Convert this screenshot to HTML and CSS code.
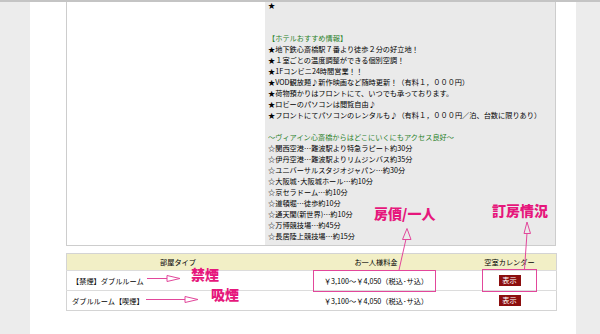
FILE: index.html
```html
<!DOCTYPE html>
<html lang="ja">
<head>
  <meta charset="UTF-8">
  <title>ヴィアイン心斎橋 プラン</title>
  <link rel="stylesheet" href="styles.css">
</head>
<body>

  <div class="page">
    <!-- room photo + hotel info -->
    <div class="room">
      <div class="photo"></div>
      <div class="info">
        <div class="lines">
          ★<br>
          <br>
          <br>
          <span class="green">【ホテルおすすめ情報】</span><br>
          ★地下鉄心斎橋駅７番より徒歩２分の好立地！<br>
          ★１室ごとの温度調整ができる個別空調！<br>
          ★1Fコンビニ24時間営業！！<br>
          ★VOD観放題♪新作映画など随時更新！（有料１，０００円）<br>
          ★荷物預かりはフロントにて、いつでも承っております。<br>
          ★ロビーのパソコンは閲覧自由♪<br>
          ★フロントにてパソコンのレンタルも♪（有料１，０００円／泊、台数に限りあり）<br>
          <br>
          <span class="green">～ヴィアイン心斎橋からはどこにいくにもアクセス良好～</span><br>
          ☆関西空港…難波駅より特急ラピート約30分<br>
          ☆伊丹空港…難波駅よりリムジンバス約35分<br>
          ☆ユニバーサルスタジオジャパン…約30分<br>
          ☆大阪城･大阪城ホール…約10分<br>
          ☆京セラドーム…約10分<br>
          ☆道頓堀…徒歩約10分<br>
          ☆通天閣(新世界)…約10分<br>
          ☆万博競技場…約45分<br>
          ☆長居陸上競技場…約15分
        </div>
      </div>
    </div>

    <!-- plan table -->
    <table class="plans">
      <tr>
        <th class="col-type">部屋タイプ</th>
        <th class="col-price">お一人様料金</th>
        <th class="col-cal">空室カレンダー</th>
      </tr>
      <tr>
        <td>【禁煙】ダブルルーム</td>
        <td class="price">￥3,100～￥4,050（税込･サ込）</td>
        <td class="cal"><span class="show">表示</span></td>
      </tr>
      <tr>
        <td>ダブルルーム【喫煙】</td>
        <td class="price">￥3,100～￥4,050（税込･サ込）</td>
        <td class="cal"><span class="show">表示</span></td>
      </tr>
    </table>
  </div>

  <!-- pink notes drawn over the screenshot -->
  <svg class="marks" width="600" height="334" viewBox="0 0 600 334">
    <rect x="313.5" y="270.5" width="122" height="21" />
    <rect x="482.5" y="269.5" width="54" height="22" />
    <line x1="406" y1="239" x2="399" y2="270" />
    <polygon points="402.5,239.5 407,228.5 411,239.5" />
    <line x1="527" y1="233" x2="524.5" y2="269" />
    <polygon points="524,233.5 527,222 530.5,233.5" />
    <line x1="147" y1="278.5" x2="167" y2="278.5" />
    <polygon points="167,275.5 180,278.5 167,281.5" />
    <line x1="146" y1="299.5" x2="185" y2="299.5" />
    <polygon points="185,296.5 198,299.5 185,302.5" />
  </svg>
  <span class="note note-price">房價/一人</span>
  <span class="note note-cal">訂房情況</span>
  <span class="note note-nosmoke">禁煙</span>
  <span class="note note-smoke">吸煙</span>

</body>
</html>
```

FILE: styles.css
```css
body {
  margin: 0;
  height: 332px;
  overflow: hidden;
  background-color: #ececec;
  border-top: 2px solid #c4c4c4;
  font-family: "Noto Sans CJK JP", sans-serif;
  color: #000;
}
.page {
  width: 546px;
  height: 332px;
  margin-left: 30px;
  padding: 0 20px 0 36px;
  box-sizing: border-box;
  background-color: #fff;
}
.room {
  display: flex;
  height: 243px;
  border: 1px solid #cdcdcd;
  border-top: none;
}
.photo {
  width: 198px;
  background-color: #fff;
}
.info {
  flex: 1;
  background-color: #eaeaea;
  padding-left: 3px;
}
.lines {
  margin-top: -2px;
  font-size: 7.2px;
  line-height: 11px;
  white-space: nowrap;
}
.green {
  color: #2a822a;
}
.plans {
  width: 491px;
  margin-top: 7px;
  border-collapse: collapse;
  border: 1px solid #d4d4d4;
  font-size: 7.2px;
}
.plans th {
  height: 16px;
  padding: 0;
  font-weight: normal;
  background-color: #f2efc6;
}
.plans td {
  height: 19px;
  padding: 0 5px;
  border-top: 1px solid #dcdcdc;
}
.col-type {
  width: 222px;
}
.col-price {
  width: 174px;
}
.price, .cal {
  text-align: center;
}
.show {
  display: inline-block;
  width: 22px;
  height: 11px;
  line-height: 11px;
  background-color: #8c0e0e;
  color: #fff;
  text-align: center;
}
.marks {
  position: absolute;
  left: 0;
  top: 0;
}
.marks rect, .marks line, .marks polygon {
  fill: none;
  stroke: #e2479b;
  stroke-width: 1;
}
.note {
  position: absolute;
  font-family: "Noto Sans CJK TC", sans-serif;
  font-size: 14px;
  font-weight: 900;
  line-height: 14px;
  color: #e6177c;
}
.note-price {
  left: 374px;
  top: 206px;
}
.note-cal {
  left: 492px;
  top: 203px;
}
.note-nosmoke {
  left: 191px;
  top: 267px;
}
.note-smoke {
  left: 211px;
  top: 287px;
}
```
